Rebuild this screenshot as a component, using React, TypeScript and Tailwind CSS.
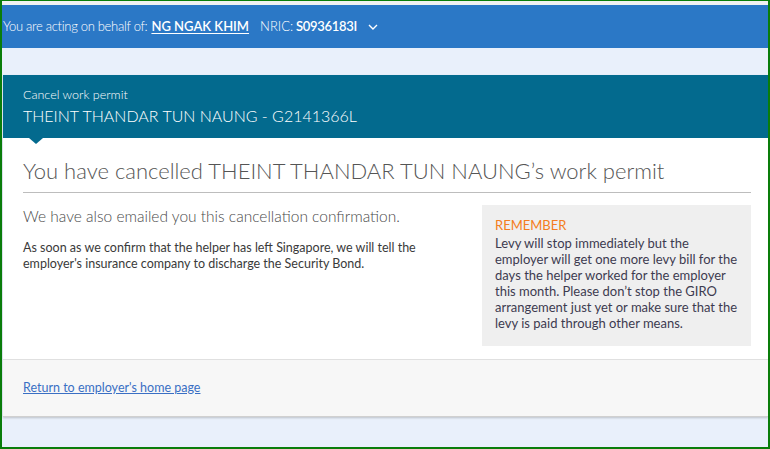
export default function App() {
  return (
    <div
      className="w-[770px] h-[449px] overflow-hidden border-t border-b-2 border-x-2 border-[#0a7d0a] bg-[#e9f0fb] flex flex-col"
      style={{ fontFamily: 'Lato, "Open Sans", sans-serif' }}
    >
      {/* acting-on-behalf bar */}
      <div className="h-[4px] bg-[#f1f1f1]" />
      <div className="h-[43px] bg-[#2b78c6] flex items-center pl-px text-[13px] text-white">
        <span className="font-light tracking-[-0.3px]">You are acting on behalf of:</span>
        <a href="#" className="ml-[4px] font-semibold underline underline-offset-2">NG NGAK KHIM</a>
        <span className="ml-[11px] font-light">NRIC:</span>
        <span className="ml-[3px] font-semibold tracking-[-0.3px]">S0936183I</span>
        <svg className="ml-[10px]" width="12" height="12" viewBox="0 0 12 12" fill="none" stroke="currentColor" strokeWidth="1.4">
          <path d="M2 4l4 4 4-4" />
        </svg>
      </div>

      <div className="h-[27px]" />

      {/* card */}
      <div className="ml-px bg-white shadow-[0_1px_2px_rgba(0,0,0,0.2)]">
        <div className="relative bg-[#036a8e] h-[63px] pl-[20px] pt-[13px] text-white">
          <p className="text-[12.5px] leading-[14px] font-light">Cancel work permit</p>
          <p className="text-[16px] leading-[20px] mt-[4px] font-light">THEINT THANDAR TUN NAUNG - G2141366L</p>
          <span className="absolute left-[26px] -bottom-[6px] w-0 h-0 border-x-[7px] border-x-transparent border-t-[6px] border-t-[#036a8e]" />
        </div>

        <div className="pl-[20px] pr-[17px] pt-[19px] pb-[13px]">
          <h1 className="text-[22px] leading-[28px] font-light text-[#555] pb-[7px] border-b border-[#bdbdbd]">
            You have cancelled THEINT THANDAR TUN NAUNG’s work permit
          </h1>

          <div className="flex justify-between mt-[13px]">
            <div className="w-[420px]">
              <p className="text-[15.5px] leading-[20px] font-light text-[#4a4a4a]">
                We have also emailed you this cancellation confirmation.
              </p>
              <p className="mt-[14px] text-[12.5px] leading-[16px] text-[#3a3a3a]">
                As soon as we confirm that the helper has left Singapore, we will tell the employer's insurance company
                to discharge the Security Bond.
              </p>
            </div>
            <div className="w-[269px] -mt-px bg-[#efefef] pl-[13px] pr-[10px] pt-[12px] pb-[15px] text-[13px] leading-[16px] text-[#3d3b4f]">
              <p className="text-[13px] text-[#f47d20] mb-[2px]">REMEMBER</p>
              <p>
                Levy will stop immediately but the employer will get one more levy bill for the days the helper worked
                for the employer this month. Please don’t stop the GIRO arrangement just yet or make sure that the levy
                is paid through other means.
              </p>
            </div>
          </div>
        </div>

        <div className="h-[58px] bg-[#f7f7f7] border-t border-[#e0e0e0] border-b border-b-[#d0d0d0] flex items-center px-[20px]">
          <a href="#" className="text-[12.5px] text-[#3a6fc4] underline">Return to employer's home page</a>
        </div>
      </div>
    </div>
  )
}
